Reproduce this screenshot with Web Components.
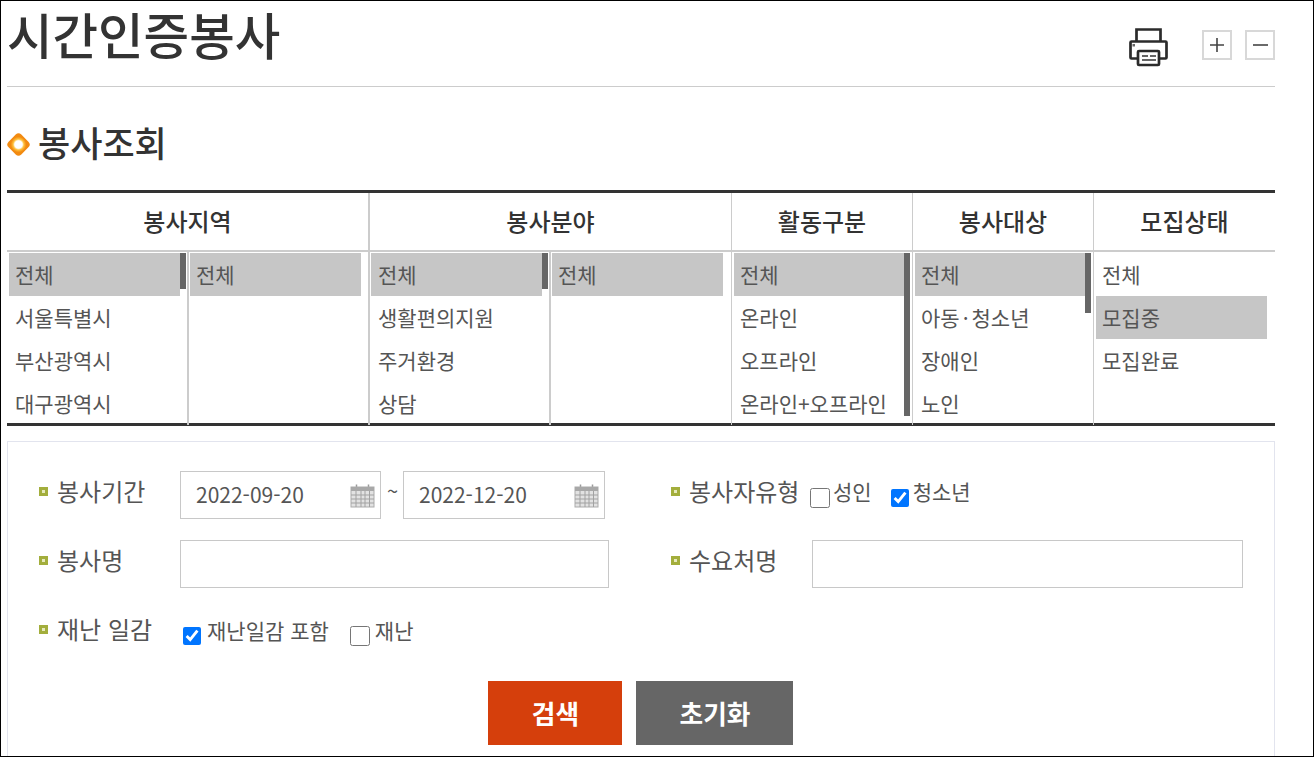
<!DOCTYPE html>
<html lang="ko">
<head>
<meta charset="utf-8">
<title>시간인증봉사</title>
<style>
  html, body { margin: 0; height: 100%; overflow: hidden; background: #fff; }
  body { font-family: "Noto Sans CJK KR", "Noto Sans", sans-serif; color: #333; }
</style>
</head>
<body>
<service-page>
  <page-header title="시간인증봉사"></page-header>
  <section-heading>봉사조회</section-heading>
  <filter-table>
    <filter-col label="봉사지역" split="182px 179px" class="thick">
      <pick-list pad="2" divider selected="0" thumb="36" thumb-left="173" items="전체,서울특별시,부산광역시,대구광역시"></pick-list>
      <pick-list pad="1" selected="0" items="전체"></pick-list>
    </filter-col>
    <filter-col label="봉사분야" split="181px 180px">
      <pick-list pad="1" text-pad="7" divider selected="0" thumb="36" thumb-left="172" items="전체,생활편의지원,주거환경,상담"></pick-list>
      <pick-list pad="1" selected="0" items="전체"></pick-list>
    </filter-col>
    <filter-col label="활동구분" split="180px">
      <pick-list pad="2" selected="0" thumb="163" thumb-left="172" items="전체,온라인,오프라인,온라인+오프라인"></pick-list>
    </filter-col>
    <filter-col label="봉사대상" split="180px">
      <pick-list pad="2" selected="0" thumb="60" thumb-left="172" items="전체,아동·청소년,장애인,노인"></pick-list>
    </filter-col>
    <filter-col label="모집상태" split="181px" class="last">
      <pick-list pad="2" selected="1" items="전체,모집중,모집완료"></pick-list>
    </filter-col>
  </filter-table>
  <search-form></search-form>
</service-page>

<script>
  class ServicePage extends HTMLElement {
    constructor () {
      super()
      this.shadow = this.attachShadow({ mode: 'open' })
      this.shadow.innerHTML = /*html*/`
        <style>
          :host {
            display: block;
            box-sizing: border-box;
            width: 1314px;
            height: 757px;
            border: 1px solid #000;
            padding: 0 38px 0 6px;
            overflow: hidden;
          }
        </style>
        <slot></slot>
      `
    }
  }

  class PageHeader extends HTMLElement {
    constructor () {
      super()
      this.shadow = this.attachShadow({ mode: 'open' })
    }

    connectedCallback () {
      this.shadow.innerHTML = /*html*/`
        <style>
          :host {
            display: flex;
            justify-content: space-between;
            box-sizing: border-box;
            height: 86px;
            border-bottom: 1px solid #ccc;
          }
          h1 {
            margin: 0;
            font-family: "Noto Sans", "Noto Sans CJK KR", sans-serif;
            font-size: 49.500px;
            line-height: 70px;
            font-weight: 500;
            color: #333;
          }
          .tools {
            display: flex;
            align-items: flex-start;
            padding-top: 29px;
          }
          .print {
            width: 40px;
            height: 40px;
            margin: -3px 33px 0 0;
          }
          .zoom {
            box-sizing: border-box;
            width: 30px;
            height: 30px;
            border: 2px solid #d8d8d8;
            margin-left: 13px;
          }
          .print + .zoom { margin-left: 0; }
          svg { display: block; }
        </style>
        <h1>${this.getAttribute('title')}</h1>
        <div class="tools">
          <svg class="print" viewBox="0 0 40 40" fill="none" stroke="#2b2b2b" stroke-width="2.700">
            <path d="M7.500 14V2.500H31.500V14"/>
            <rect x="1.500" y="14.500" width="36" height="17" rx="1" fill="#fff"/>
            <rect x="9" y="24" width="21" height="14" rx="1" fill="#fff"/>
            <path d="M13 29h6M21 29h6M13 33h14" stroke-width="2" stroke="#666"/>
            <rect x="3.500" y="17" width="2.500" height="2.500" fill="#666" stroke="none"/>
          </svg>
          <div class="zoom">
            <svg width="26" height="26" viewBox="0 0 26 26" stroke="#444" stroke-width="1.600"><path d="M6 13h14M13 6v14"/></svg>
          </div>
          <div class="zoom">
            <svg width="26" height="26" viewBox="0 0 26 26" stroke="#444" stroke-width="1.600"><path d="M6 13h15"/></svg>
          </div>
        </div>
      `
    }
  }

  class SectionHeading extends HTMLElement {
    constructor () {
      super()
      this.shadow = this.attachShadow({ mode: 'open' })
      this.shadow.innerHTML = /*html*/`
        <style>
          :host {
            display: flex;
            align-items: center;
            gap: 8px;
            height: 103px;
            padding-top: 11px;
            box-sizing: border-box;
            font-size: 35px;
            font-weight: 500;
            color: #333;
          }
          .mark {
            width: 23px;
            height: 23px;
            flex: none;
          }
          span { padding-bottom: 6px; }
        </style>
        <svg class="mark" viewBox="0 0 23 23">
          <defs>
            <radialGradient id="glow">
              <stop offset="0.420" stop-color="#fff"/>
              <stop offset="0.600" stop-color="#ffc23c"/>
              <stop offset="0.860" stop-color="#f28a10"/>
            </radialGradient>
          </defs>
          <rect x="2.500" y="2.500" width="18" height="18" rx="4" transform="rotate(45 11.500 11.500)" fill="url(#glow)"/>
        </svg>
        <span><slot></slot></span>
      `
    }
  }

  class FilterTable extends HTMLElement {
    constructor () {
      super()
      this.shadow = this.attachShadow({ mode: 'open' })
      this.shadow.innerHTML = /*html*/`
        <style>
          :host {
            display: grid;
            grid-template-columns: 363px 362px 181px 181px 181px;
            box-sizing: border-box;
            width: 1268px;
            height: 236px;
            border-top: 3px solid #333;
            border-bottom: 3px solid #333;
          }
        </style>
        <slot></slot>
      `
    }
  }

  class FilterCol extends HTMLElement {
    constructor () {
      super()
      this.shadow = this.attachShadow({ mode: 'open' })
    }

    connectedCallback () {
      this.shadow.innerHTML = /*html*/`
        <style>
          :host {
            display: flex;
            flex-direction: column;
            min-width: 0;
            box-sizing: border-box;
            border-right: 1px solid #ccc;
          }
          :host(.thick) { border-right-width: 2px; }
          :host(.last) { border-right: 0; }
          h3 {
            margin: 0;
            height: 59px;
            box-sizing: border-box;
            border-bottom: 2px solid #ccc;
            text-align: center;
            font-size: 24px;
            line-height: 55px;
            font-weight: 500;
            color: #333;
          }
          .lists {
            flex: 1;
            display: grid;
            grid-template-columns: ${this.getAttribute('split')};
            min-height: 0;
          }
        </style>
        <h3>${this.getAttribute('label')}</h3>
        <div class="lists"><slot></slot></div>
      `
    }
  }

  class PickList extends HTMLElement {
    constructor () {
      super()
      this.shadow = this.attachShadow({ mode: 'open' })
    }

    connectedCallback () {
      const selected = Number(this.getAttribute('selected'))
      const thumb = this.getAttribute('thumb')
      this.shadow.innerHTML = /*html*/`
        <style>
          :host {
            display: block;
            position: relative;
            min-width: 0;
            box-sizing: border-box;
            padding: 1px 0 0 ${this.getAttribute('pad')}px;
            overflow: hidden;
          }
          :host([divider]) { border-right: 2px solid #ccc; }
          .item {
            box-sizing: border-box;
            width: 171px;
            height: 43px;
            padding-left: ${this.getAttribute('text-pad') || 6}px;
            font-size: 21px;
            line-height: 43px;
            color: #555;
            white-space: nowrap;
          }
          .item.on { background: #c6c6c6; }
          .dot { margin: 0 3px; }
          .thumb {
            position: absolute;
            top: 1px;
            left: ${this.getAttribute('thumb-left')}px;
            width: 6px;
            background: #666;
          }
        </style>
        <div class="items"></div>
        ${thumb ? `<div class="thumb" style="height:${thumb}px"></div>` : ''}
      `

      const items = this.shadow.querySelector('.items')

      this.getAttribute('items').split(',').forEach((text, index) => {
        const item = document.createElement('div')
        item.classList.add('item')
        if (index === selected) item.classList.add('on')
        item.innerHTML = text.replace('·', '<span class="dot">·</span>')
        items.appendChild(item)
      })
    }
  }

  class DateField extends HTMLElement {
    constructor () {
      super()
      this.shadow = this.attachShadow({ mode: 'open' })
    }

    connectedCallback () {
      this.shadow.innerHTML = /*html*/`
        <style>
          :host {
            display: flex;
            align-items: center;
            justify-content: space-between;
            box-sizing: border-box;
            height: 48px;
            padding: 0 5px 0 15px;
            border: 1px solid #c8c8c8;
            font-size: 21px;
            color: #555;
          }
          span { padding-bottom: 2px; }
          svg { display: block; margin-top: 1px; }
        </style>
        <span>${this.getAttribute('value')}</span>
        <svg width="25" height="24" viewBox="0 0 25 24" fill="none">
          <path d="M6.500 0.500v4M18.500 0.500v4" stroke="#9a9a9a" stroke-width="1.500"/>
          <rect x="1" y="3" width="23" height="20" fill="#e2e2e2" stroke="#ababab" stroke-width="1"/>
          <rect x="1" y="3" width="23" height="4" fill="#a8a8a8"/>
          <path d="M1 11h23M1 15h23M1 19h23M6 7v16M11 7v16M15 7v16M19.500 7v16" stroke="#a2a2a2" stroke-width="1"/>
        </svg>
      `
    }
  }

  class CheckItem extends HTMLElement {
    constructor () {
      super()
      this.shadow = this.attachShadow({ mode: 'open' })
    }

    connectedCallback () {
      const checked = this.hasAttribute('checked')
      this.shadow.innerHTML = /*html*/`
        <style>
          :host {
            display: inline-flex;
            align-items: flex-start;
            gap: var(--gap, 4px);
            font-size: 21px;
            line-height: 28px;
            color: #555;
          }
          input {
            margin: ${checked ? 18 : 17}px 0 0 0;
            width: ${checked ? 18 : 20}px;
            height: ${checked ? 18 : 20}px;
            accent-color: #0075ff;
          }
          span { padding-top: var(--text-top, 6px); }
        </style>
        <input type="checkbox" ${checked ? 'checked' : ''}>
        <span><slot></slot></span>
      `
    }
  }

  class FormRow extends HTMLElement {
    constructor () {
      super()
      this.shadow = this.attachShadow({ mode: 'open' })
    }

    connectedCallback () {
      this.shadow.innerHTML = /*html*/`
        <style>
          :host {
            display: flex;
            align-items: flex-start;
          }
          .label {
            flex: none;
            display: flex;
            align-items: center;
            gap: 9px;
            width: 141px;
            padding-top: 4px;
            font-size: 24px;
            line-height: 32px;
            color: #555;
            white-space: nowrap;
          }
          .label::before {
            content: "";
            flex: none;
            box-sizing: border-box;
            width: 9px;
            height: 9px;
            border: 3px solid #a3ae3c;
            background: #e6e9bc;
          }
          .body {
            flex: 1;
            display: flex;
            align-items: flex-start;
            min-width: 0;
          }
        </style>
        <div class="label">${this.getAttribute('label')}</div>
        <div class="body"><slot></slot></div>
      `
    }
  }

  class SearchForm extends HTMLElement {
    constructor () {
      super()
      this.shadow = this.attachShadow({ mode: 'open' })
    }

    connectedCallback () {
      this.shadow.innerHTML = /*html*/`
        <style>
          :host {
            display: block;
            box-sizing: border-box;
            width: 1268px;
            height: 330px;
            margin-top: 15px;
            border: 1px solid #e2e4ee;
            padding: 29px 31px 0 31px;
          }
          .grid {
            display: grid;
            grid-template-columns: 632px 1fr;
            grid-template-rows: 48px 48px 48px;
            row-gap: 21px;
          }
          .dates {
            display: flex;
            gap: 6px;
          }
          .tilde {
            width: 10px;
            font-size: 20px;
            line-height: 40px;
            text-align: center;
            color: #555;
          }
          .first { width: 201px; }
          .second { width: 202px; }
          .box {
            box-sizing: border-box;
            height: 48px;
            border: 1px solid #c8c8c8;
          }
          .checks { display: flex; gap: 19px; margin-left: -2px; }
          .checks.wide { gap: 21px; margin-left: 3px; --text-top: 7px; }
          .actions {
            display: flex;
            justify-content: center;
            gap: 14px;
            margin-top: 24px;
            padding-right: 1px;
          }
          .actions button {
            height: 64px;
            border: 0;
            padding: 0 0 2px 1px;
            font: 700 25.700px "Noto Sans CJK KR", sans-serif;
            color: #fff;
          }
          .search { width: 134px; background: #d53f0c; }
          .reset { width: 157px; background: #666; }
        </style>
        <div class="grid">
          <form-row label="봉사기간">
            <div class="dates">
              <date-field class="first" value="2022-09-20"></date-field>
              <span class="tilde">~</span>
              <date-field class="second" value="2022-12-20"></date-field>
            </div>
          </form-row>
          <form-row label="봉사자유형">
            <div class="checks">
              <check-item style="--gap:3px">성인</check-item>
              <check-item checked>청소년</check-item>
            </div>
          </form-row>
          <form-row label="봉사명">
            <div class="box" style="width:429px"></div>
          </form-row>
          <form-row label="수요처명">
            <div class="box" style="width:431px"></div>
          </form-row>
          <form-row label="재난 일감">
            <div class="checks wide">
              <check-item checked style="--gap:6px">재난일감 포함</check-item>
              <check-item style="--gap:5px">재난</check-item>
            </div>
          </form-row>
        </div>
        <div class="actions">
          <button class="search">검색</button>
          <button class="reset">초기화</button>
        </div>
      `
    }
  }

  customElements.define('service-page', ServicePage)
  customElements.define('page-header', PageHeader)
  customElements.define('section-heading', SectionHeading)
  customElements.define('filter-table', FilterTable)
  customElements.define('filter-col', FilterCol)
  customElements.define('pick-list', PickList)
  customElements.define('date-field', DateField)
  customElements.define('check-item', CheckItem)
  customElements.define('form-row', FormRow)
  customElements.define('search-form', SearchForm)
</script>
</body>
</html>
